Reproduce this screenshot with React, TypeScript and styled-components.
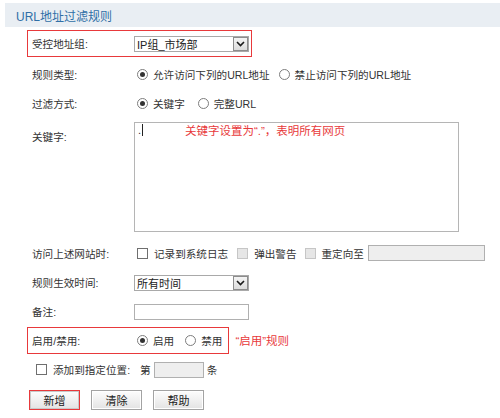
import React from "react";
import styled, { createGlobalStyle } from "styled-components";

const GlobalStyle = createGlobalStyle`
  html, body {
    margin: 0;
    padding: 0;
    background: #ffffff;
  }
  body {
    font-family: "Liberation Sans", "Noto Sans CJK SC", sans-serif;
    font-size: 10.6px;
    color: #333333;
  }
`;

const RED = "#e8393b";

const Page = styled.div`
  width: 500px;
  height: 418px;
  padding-top: 3px;
  box-sizing: border-box;
  overflow: hidden;
`;

const Header = styled.div`
  margin-left: 5px;
  height: 24px;
  background-color: #e9eef3;
  display: flex;
  align-items: center;
  padding-left: 11px;
  font-size: 12px;
  color: #2f6ea6;
`;

const Form = styled.div`
  display: flex;
  flex-direction: column;
  padding-left: 27px;
  padding-top: 3px;
`;

const Row = styled.div<{ $height: number; $boxed?: boolean; $padRight?: number; $top?: number }>`
  display: flex;
  align-items: center;
  align-self: ${(p) => (p.$boxed ? "flex-start" : "stretch")};
  height: ${(p) => p.$height}px;
  box-sizing: border-box;
  border: 1px solid ${(p) => (p.$boxed ? RED : "transparent")};
  padding-left: 4px;
  padding-right: ${(p) => p.$padRight ?? 0}px;
  margin-top: ${(p) => p.$top ?? 0}px;
`;

const TallRow = styled.div`
  display: flex;
  align-items: flex-start;
  padding-left: 5px;
  padding-top: 4px;
  height: 116px;
`;

const Label = styled.div<{ $pt?: number }>`
  width: 102px;
  flex-shrink: 0;
  white-space: nowrap;
  padding-top: ${(p) => p.$pt ?? 0}px;
`;

const Field = styled.div`
  display: flex;
  align-items: center;
  white-space: nowrap;
`;

const SelectBox = styled.div<{ $width: number }>`
  width: ${(p) => p.$width}px;
  height: 16px;
  box-sizing: border-box;
  border: 1px solid #a9a9a9;
  background: #ffffff;
  display: flex;
  align-items: center;
  justify-content: space-between;
  padding-left: 2px;
  font-size: 11px;
  color: #222222;
`;

const SelectArrow = styled.div`
  width: 15px;
  height: 14px;
  box-sizing: border-box;
  border: 1px solid #8c8c8c;
  background: linear-gradient(#f4f4f4, #dcdcdc);
  display: flex;
  align-items: center;
  justify-content: center;
`;

const Annotation = styled.span<{ $ml: number }>`
  margin-left: ${(p) => p.$ml}px;
  color: ${RED};
  font-size: 11.5px;
  white-space: nowrap;
`;

const Option = styled.label<{ $mr?: number }>`
  display: flex;
  align-items: center;
  margin-right: ${(p) => p.$mr ?? 7}px;
`;

const RadioDot = styled.span<{ $checked?: boolean }>`
  width: 11px;
  height: 11px;
  box-sizing: border-box;
  border-radius: 50%;
  border: 1px solid #7d7d7d;
  background: #ffffff;
  margin: 0 5px 0 3px;
  display: flex;
  align-items: center;
  justify-content: center;
  &::after {
    content: "";
    width: 5px;
    height: 5px;
    border-radius: 50%;
    background: ${(p) => (p.$checked ? "#333333" : "transparent")};
  }
`;

const CheckSquare = styled.span<{ $disabled?: boolean }>`
  width: 11px;
  height: 11px;
  box-sizing: border-box;
  border: 1px solid ${(p) => (p.$disabled ? "#c6c6c6" : "#6f6f6f")};
  background: ${(p) => (p.$disabled ? "#e6e6e6" : "#ffffff")};
  margin: 0 6px 0 3px;
`;

const TextInput = styled.div<{ $width: number; $disabled?: boolean }>`
  width: ${(p) => p.$width}px;
  height: 16px;
  box-sizing: border-box;
  border: 1px solid #b0b0b0;
  background: ${(p) => (p.$disabled ? "#eeeeee" : "#ffffff")};
`;

const KeywordArea = styled.div`
  position: relative;
  width: 325px;
  height: 110px;
  box-sizing: border-box;
  border: 1px solid #b5b5b5;
  padding: 1px 3px;
  font-size: 11px;
  line-height: 13px;
`;

const Caret = styled.span`
  display: inline-block;
  width: 1px;
  height: 12px;
  background: #222222;
  vertical-align: top;
  margin-left: 1px;
`;

const AreaNote = styled.span`
  position: absolute;
  left: 50px;
  top: 2px;
  color: ${RED};
  font-size: 11.5px;
  white-space: nowrap;
`;

const PlainText = styled.span<{ $ml?: number; $mr?: number }>`
  margin-left: ${(p) => p.$ml ?? 0}px;
  margin-right: ${(p) => p.$mr ?? 0}px;
`;

const AddRow = styled.div`
  display: flex;
  align-items: center;
  height: 27px;
  padding-left: 6px;
  margin-top: 2px;
`;

const ButtonBar = styled.div`
  display: flex;
  gap: 11px;
  padding-left: 2px;
  margin-top: 7px;
`;

const Button = styled.button<{ $active?: boolean }>`
  width: 51px;
  height: 20px;
  box-sizing: border-box;
  border: 1px solid ${(p) => (p.$active ? RED : "#a3a3a3")};
  box-shadow: inset 0 0 0 1px ${(p) => (p.$active ? "#c9c9c9" : "#ffffff")};
  background: linear-gradient(#fdfdfd, #e3e3e3);
  font-family: "Liberation Sans", "Noto Sans CJK SC", sans-serif;
  font-size: 11px;
  color: #222222;
  padding: 0;
  cursor: pointer;
`;

const Chevron = () => (
  <svg width="9" height="6" viewBox="0 0 9 6">
    <path d="M1 1 L4.5 4.5 L8 1" fill="none" stroke="#1a1a1a" strokeWidth="1.6" />
  </svg>
);

const Select: React.FC<{ value: string; width: number }> = ({ value, width }) => (
  <SelectBox $width={width}>
    <span>{value}</span>
    <SelectArrow>
      <Chevron />
    </SelectArrow>
  </SelectBox>
);

const Radio: React.FC<{ checked?: boolean; text: string; mr?: number }> = ({ checked, text, mr }) => (
  <Option $mr={mr}>
    <RadioDot $checked={checked} />
    {text}
  </Option>
);

const Check: React.FC<{ disabled?: boolean; text: string; mr?: number }> = ({ disabled, text, mr }) => (
  <Option $mr={mr}>
    <CheckSquare $disabled={disabled} />
    {text}
  </Option>
);

export default function App() {
  return (
    <Page>
      <GlobalStyle />
      <Header>URL地址过滤规则</Header>
      <Form>
        <Row $height={27} $boxed $padRight={2}>
          <Label>受控地址组:</Label>
          <Field>
            <Select value="IP组_市场部" width={115} />
          </Field>
        </Row>
        <Row $height={29} $top={3}>
          <Label>规则类型:</Label>
          <Field>
            <Radio checked text="允许访问下列的URL地址" mr={6} />
            <Radio text="禁止访问下列的URL地址" />
          </Field>
        </Row>
        <Row $height={29}>
          <Label>过滤方式:</Label>
          <Field>
            <Radio checked text="关键字" mr={10} />
            <Radio text="完整URL" />
          </Field>
        </Row>
        <TallRow>
          <Label $pt={7}>关键字:</Label>
          <KeywordArea>
            .<Caret />
            <AreaNote>关键字设置为“.”，表明所有网页</AreaNote>
          </KeywordArea>
        </TallRow>
        <Row $height={30}>
          <Label>访问上述网站时:</Label>
          <Field>
            <Check text="记录到系统日志" mr={6} />
            <Check disabled text="弹出警告" mr={5} />
            <Check disabled text="重定向至" mr={4} />
            <TextInput $width={117} $disabled />
          </Field>
        </Row>
        <Row $height={29}>
          <Label>规则生效时间:</Label>
          <Field>
            <Select value="所有时间" width={115} />
          </Field>
        </Row>
        <Row $height={29}>
          <Label>备注:</Label>
          <Field>
            <TextInput $width={115} />
          </Field>
        </Row>
        <Field>
          <Row $height={27} $boxed $padRight={6} $top={1}>
            <Label>启用/禁用:</Label>
            <Field>
              <Radio checked text="启用" mr={8} />
              <Radio text="禁用" mr={0} />
            </Field>
          </Row>
          <Annotation $ml={6}>“启用”规则</Annotation>
        </Field>
        <AddRow>
          <Check text="添加到指定位置:" mr={10} />
          <PlainText $mr={3}>第</PlainText>
          <TextInput $width={50} $disabled />
          <PlainText $ml={3}>条</PlainText>
        </AddRow>
        <ButtonBar>
          <Button $active>新增</Button>
          <Button>清除</Button>
          <Button>帮助</Button>
        </ButtonBar>
      </Form>
    </Page>
  );
}
